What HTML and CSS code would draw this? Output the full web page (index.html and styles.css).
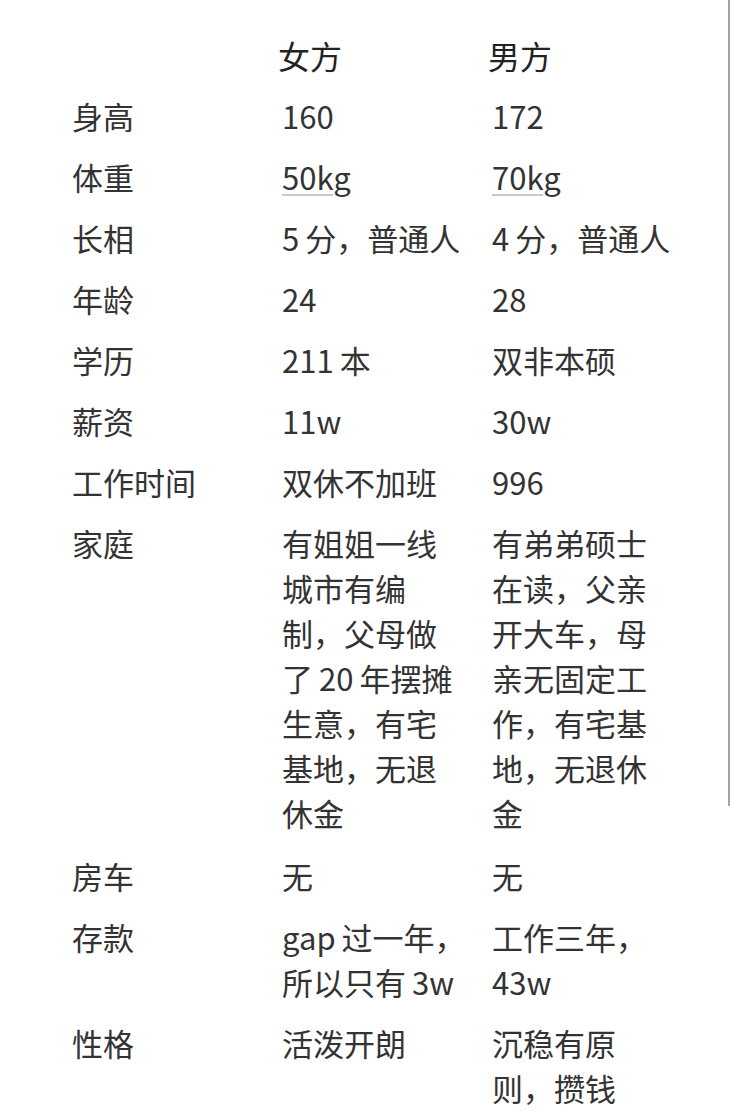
FILE: index.html
```html
<!DOCTYPE html>
<html lang="zh-CN">
<head>
<meta charset="utf-8">
<title>对比</title>
<link rel="stylesheet" href="styles.css">
</head>
<body>
<div class="sheet">
  <div class="grid">
    <div class="cell head"></div>
    <div class="cell head"><span class="htxt">女方</span></div>
    <div class="cell head"><span class="htxt">男方</span></div>

    <div class="cell">身高</div>
    <div class="cell">160</div>
    <div class="cell">172</div>

    <div class="cell">体重</div>
    <div class="cell"><span class="ul">50k</span>g</div>
    <div class="cell"><span class="ul">70k</span>g</div>

    <div class="cell">长相</div>
    <div class="cell"><span class="lat">5</span>分，普通人</div>
    <div class="cell"><span class="lat">4</span>分，普通人</div>

    <div class="cell">年龄</div>
    <div class="cell">24</div>
    <div class="cell">28</div>

    <div class="cell">学历</div>
    <div class="cell"><span class="lat">211</span>本</div>
    <div class="cell">双非本硕</div>

    <div class="cell">薪资</div>
    <div class="cell">11w</div>
    <div class="cell">30w</div>

    <div class="cell">工作时间</div>
    <div class="cell">双休不加班</div>
    <div class="cell">996</div>

    <div class="cell">家庭</div>
    <div class="cell">有姐姐一线城市有编制，父母做了<span class="latb">20</span>年摆摊生意，有宅基地，无退休金</div>
    <div class="cell">有弟弟硕士在读，父亲开大车，母亲无固定工作，有宅基地，无退休金</div>

    <div class="cell lower">房车</div>
    <div class="cell lower">无</div>
    <div class="cell lower">无</div>

    <div class="cell lower">存款</div>
    <div class="cell lower"><span class="lat">gap</span>过一年，所以只有<span class="latl">3w</span></div>
    <div class="cell lower">工作三年，43w</div>

    <div class="cell lower">性格</div>
    <div class="cell lower">活泼开朗</div>
    <div class="cell lower">沉稳有原则，攒钱</div>
  </div>
</div>
<div class="scrollbar"></div>
</body>
</html>
```

FILE: styles.css
```css
html, body {
  margin: 0;
  padding: 0;
  background: #ffffff;
}

body {
  font-family: "Noto Sans CJK SC", "Noto Sans", sans-serif;
  color: #333333;
  width: 732px;
  height: 1112px;
  overflow: hidden;
  position: relative;
}

.sheet {
  padding: 33px 0 0 72px;
}

.grid {
  display: grid;
  grid-template-columns: 185px 185px 185px;
  column-gap: 25px;
  row-gap: 16px;
  align-items: start;
}

.cell {
  font-size: 31px;
  line-height: 45px;
}

.cell.lower {
  position: relative;
  top: 2px;
}

.head {
  font-size: 32px;
  font-weight: 400;
  color: #222222;
  margin-bottom: -1px;
}

.htxt {
  display: inline-block;
  margin-left: -4px;
}

.ul {
  text-decoration: underline;
  text-decoration-color: #c8c8c8;
  text-decoration-thickness: 1.5px;
  text-underline-offset: 4px;
}

.lat {
  margin-right: 6px;
}

.latb {
  margin: 0 6px;
}

.latl {
  margin-left: 6px;
}

.scrollbar {
  position: absolute;
  top: 0;
  right: 2px;
  width: 2px;
  height: 806px;
  background: #a3a3a3;
}
```
